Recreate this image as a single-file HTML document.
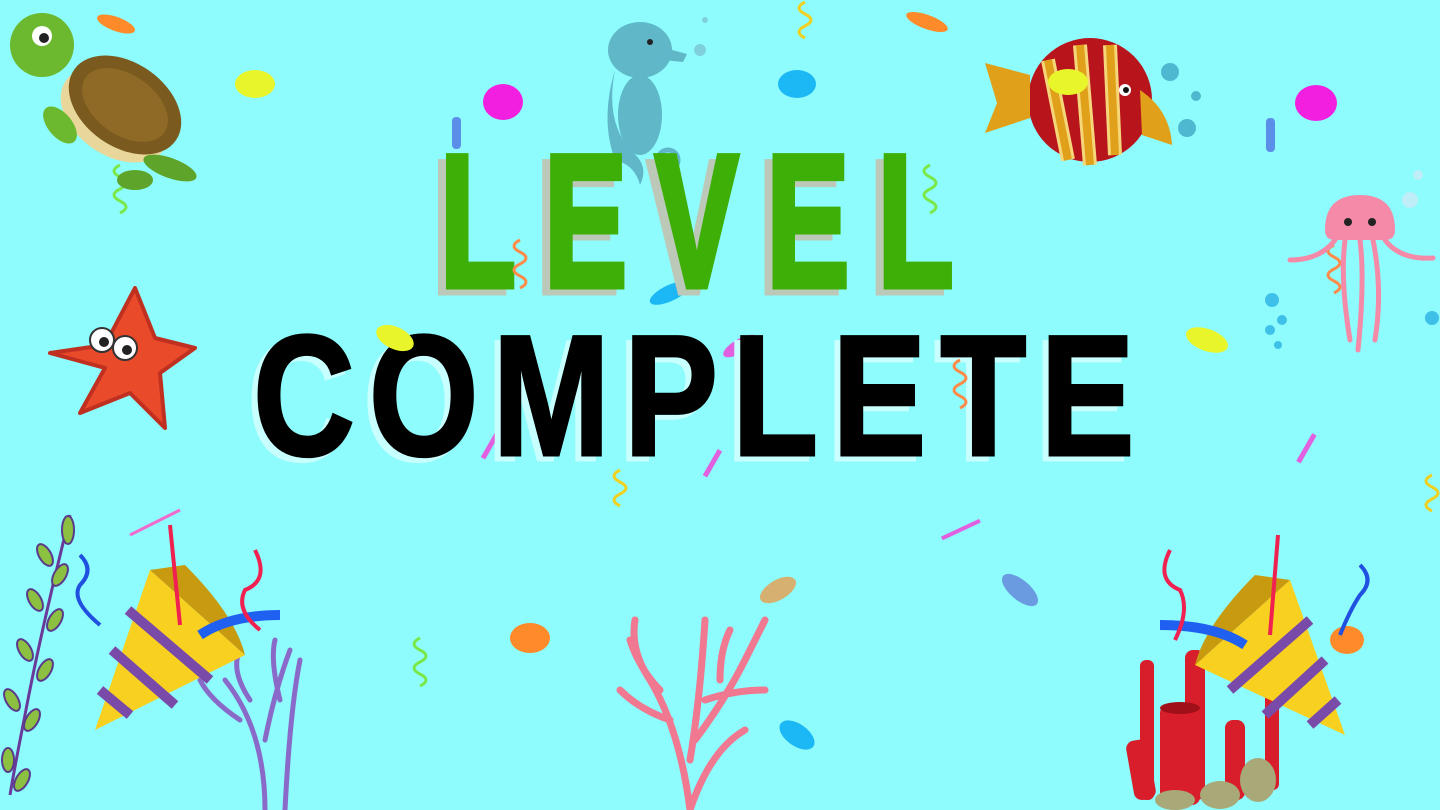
<!DOCTYPE html>
<html><head><meta charset="utf-8"><style>
html,body{margin:0;padding:0;width:1440px;height:810px;overflow:hidden;background:#8efcfc}
svg{display:block}
</style></head><body>
<svg width="1440" height="810" viewBox="0 0 1440 810" xmlns="http://www.w3.org/2000/svg">
<rect width="1440" height="810" fill="#8efcfc"/>
<g>
<ellipse cx="116" cy="24" rx="20" ry="7" fill="#ff8a2a" transform="rotate(20 116 24)"/>
<ellipse cx="255" cy="84" rx="20" ry="14" fill="#e8f52a"/>
<ellipse cx="503" cy="102" rx="20" ry="18" fill="#f21fe0"/>
<ellipse cx="797" cy="84" rx="19" ry="14" fill="#1cb8f5"/>
<ellipse cx="927" cy="22" rx="22" ry="7" fill="#ff8a2a" transform="rotate(20 927 22)"/>
<ellipse cx="1316" cy="103" rx="21" ry="18" fill="#f21fe0"/>
<rect x="452" y="117" width="9" height="32" rx="4" fill="#5b8ee8"/>
<rect x="1266" y="118" width="9" height="34" rx="4" fill="#5b8ee8"/>
<ellipse cx="670" cy="293" rx="22" ry="8" fill="#1cb8f5" transform="rotate(-25 670 293)"/>
<ellipse cx="740" cy="346" rx="19" ry="7" fill="#e060e0" transform="rotate(-30 740 346)"/>
<ellipse cx="1207" cy="340" rx="22" ry="11" fill="#e8f52a" transform="rotate(20 1207 340)"/>
<rect x="488" y="430" width="5" height="30" fill="#e060e0" transform="rotate(30 490 445)"/>
<rect x="710" y="448" width="5" height="30" fill="#e060e0" transform="rotate(30 712 463)"/>
<rect x="1304" y="432" width="5" height="32" fill="#e060e0" transform="rotate(30 1306 448)"/>
<rect x="940" y="528" width="42" height="4" fill="#e060e0" transform="rotate(-25 960 530)"/>
<ellipse cx="778" cy="590" rx="20" ry="10" fill="#d6b070" transform="rotate(-30 778 590)"/>
<ellipse cx="1020" cy="590" rx="22" ry="10" fill="#6a9ae0" transform="rotate(40 1020 590)"/>
<ellipse cx="530" cy="638" rx="20" ry="15" fill="#ff8a2a"/>
<ellipse cx="797" cy="735" rx="20" ry="11" fill="#1cb8f5" transform="rotate(35 797 735)"/>
<ellipse cx="1347" cy="640" rx="17" ry="14" fill="#ff8a2a"/>
</g>
<g fill="none" stroke-width="3">
<path d="M120 165 q-12 6 0 12 q12 6 0 12 q-12 6 0 12 q12 6 0 12" stroke="#7be84a"/>
<path d="M930 165 q-12 6 0 12 q12 6 0 12 q-12 6 0 12 q12 6 0 12" stroke="#7be84a"/>
<path d="M148 365 q-12 6 0 12 q12 6 0 12 q-12 6 0 12 q12 6 0 12" stroke="#ff8a4a"/>
<path d="M620 470 q-12 6 0 12 q12 6 0 12 q-12 6 0 12" stroke="#f0d020"/>
<path d="M805 2 q-12 6 0 12 q12 6 0 12 q-12 6 0 12" stroke="#f0d020"/>
<path d="M420 638 q-12 6 0 12 q12 6 0 12 q-12 6 0 12 q12 6 0 12" stroke="#7be84a"/>
<path d="M1334 245 q-12 6 0 12 q12 6 0 12 q-12 6 0 12 q12 6 0 12" stroke="#ff8a4a"/>
<path d="M1432 475 q-12 6 0 12 q12 6 0 12 q-12 6 0 12" stroke="#f0d020"/>
</g>
<g>
<ellipse cx="115" cy="115" rx="60" ry="40" fill="#e8d69a" transform="rotate(35 115 115)"/>
<ellipse cx="125" cy="105" rx="62" ry="42" fill="#7a5a1e" transform="rotate(35 125 105)"/>
<ellipse cx="125" cy="105" rx="48" ry="30" fill="#8e6a26" transform="rotate(35 125 105)"/>
<circle cx="42" cy="45" r="32" fill="#6cb82e"/>
<circle cx="42" cy="36" r="10" fill="#fff"/><circle cx="44" cy="38" r="5" fill="#222"/>
<ellipse cx="60" cy="125" rx="22" ry="12" fill="#6cb82e" transform="rotate(50 60 125)"/>
<ellipse cx="170" cy="168" rx="28" ry="10" fill="#5fa42a" transform="rotate(20 170 168)"/>
<ellipse cx="135" cy="180" rx="18" ry="10" fill="#5fa42a"/>
</g>
<g fill="#5fb7c8">
<ellipse cx="640" cy="50" rx="32" ry="28"/>
<path d="M665 48 l22 6 -4 8 -20 -2z"/>
<path d="M615 70 q-10 50 15 80 q20 15 10 35 q-5 -20 -25 -25 q-15 -40 0 -90z"/>
<ellipse cx="640" cy="115" rx="22" ry="40"/>
<circle cx="668" cy="160" r="10" fill="none" stroke="#5fb7c8" stroke-width="5"/>
<circle cx="650" cy="42" r="3" fill="#222"/>
<circle cx="700" cy="50" r="6" fill="#7fd0dc"/><circle cx="705" cy="20" r="3" fill="#7fd0dc"/>
</g>
<g>
<ellipse cx="1090" cy="100" rx="62" ry="62" fill="#b8141c"/>
<path d="M1048 60 l20 100 M1080 45 l10 120 M1110 45 l5 110" stroke="#f5d77a" stroke-width="14"/>
<path d="M1048 60 l20 100 M1080 45 l10 120 M1110 45 l5 110" stroke="#e0a01a" stroke-width="8"/>
<path d="M1030 75 l-45 -12 l12 40 l-12 30 l45 -15z" fill="#e0a01a"/>
<path d="M1140 90 q30 20 32 55 l-30 -10z" fill="#e0a01a"/>
<circle cx="1125" cy="90" r="6" fill="#fff"/><circle cx="1126" cy="90" r="3" fill="#111"/>
<ellipse cx="1068" cy="82" rx="20" ry="13" fill="#e8f52a"/>
<circle cx="1170" cy="72" r="9" fill="#4db8d0"/><circle cx="1187" cy="128" r="9" fill="#4db8d0"/><circle cx="1196" cy="96" r="5" fill="#4db8d0"/>
</g>
<g>
<path d="M1325 230 q0 -35 35 -35 q35 0 35 35 q0 10 -10 10 h-50 q-10 0 -10 -10z" fill="#f48aa8"/>
<circle cx="1348" cy="222" r="4" fill="#222"/><circle cx="1372" cy="222" r="4" fill="#222"/>
<g fill="none" stroke="#f48aa8" stroke-width="5" stroke-linecap="round">
<path d="M1335 240 q-15 20 -45 20"/><path d="M1385 240 q15 20 48 18"/>
<path d="M1345 240 q-5 40 5 100"/><path d="M1360 240 q5 40 -2 110"/><path d="M1373 240 q10 50 2 100"/>
</g>
<g fill="#3ec0e8"><circle cx="1272" cy="300" r="7"/><circle cx="1282" cy="320" r="5"/><circle cx="1270" cy="330" r="5"/><circle cx="1278" cy="345" r="4"/><circle cx="1432" cy="318" r="7"/><circle cx="1410" cy="200" r="8" fill="#bfeef8"/><circle cx="1418" cy="175" r="5" fill="#bfeef8"/></g>
</g>
<g>
<path d="M135 288 l20 50 l40 10 l-35 25 l5 55 l-35 -35 l-50 20 l25 -45 l-55 -15 l55 -8z" fill="#e84a2a" stroke="#c03020" stroke-width="4" stroke-linejoin="round"/>
<circle cx="102" cy="340" r="12" fill="#fff" stroke="#333" stroke-width="2"/><circle cx="125" cy="348" r="12" fill="#fff" stroke="#333" stroke-width="2"/>
<circle cx="104" cy="342" r="5" fill="#222"/><circle cx="127" cy="350" r="5" fill="#222"/>
</g>
<g font-family="'Liberation Sans',sans-serif" font-weight="bold">
<g transform="translate(432,292) scale(0.66,1)"><text x="0" y="0" font-size="188" textLength="778" lengthAdjust="spacing" fill="#bcc8b8" stroke="#bcc8b8" stroke-width="7">LEVEL</text></g>
<g transform="translate(440,286) scale(0.66,1)"><text x="0" y="0" font-size="188" textLength="778" lengthAdjust="spacing" fill="#3daf06" stroke="#3daf06" stroke-width="7">LEVEL</text></g>
<g transform="translate(247,460) scale(0.82,1)"><text x="0" y="0" font-size="172" textLength="1075" lengthAdjust="spacing" fill="#c8ffff" stroke="#c8ffff" stroke-width="3">COMPLETE</text></g>
<g transform="translate(253,455) scale(0.82,1)"><text x="0" y="0" font-size="172" textLength="1075" lengthAdjust="spacing" fill="#000" stroke="#000" stroke-width="3">COMPLETE</text></g>
</g>
<ellipse cx="395" cy="338" rx="20" ry="11" fill="#e8f52a" transform="rotate(25 395 338)"/>
<path d="M520 240 q-12 6 0 12 q12 6 0 12 q-12 6 0 12 q12 6 0 12" stroke="#ff8a4a" stroke-width="3" fill="none"/>
<path d="M960 360 q-12 6 0 12 q12 6 0 12 q-12 6 0 12 q12 6 0 12" stroke="#ff8a4a" stroke-width="3" fill="none"/>
<g>
<path d="M70 515 q-30 120 -45 200 q-10 50 -15 80" stroke="#6a3a9a" stroke-width="3" fill="none"/>
<g fill="#8cc040" stroke="#5a3a8a" stroke-width="2">
<ellipse cx="68" cy="530" rx="6" ry="14"/><ellipse cx="45" cy="555" rx="6" ry="12" transform="rotate(-30 45 555)"/><ellipse cx="60" cy="575" rx="6" ry="12" transform="rotate(30 60 575)"/>
<ellipse cx="35" cy="600" rx="6" ry="12" transform="rotate(-30 35 600)"/><ellipse cx="55" cy="620" rx="6" ry="12" transform="rotate(30 55 620)"/>
<ellipse cx="25" cy="650" rx="6" ry="12" transform="rotate(-30 25 650)"/><ellipse cx="45" cy="670" rx="6" ry="12" transform="rotate(30 45 670)"/>
<ellipse cx="12" cy="700" rx="6" ry="12" transform="rotate(-30 12 700)"/><ellipse cx="32" cy="720" rx="6" ry="12" transform="rotate(30 32 720)"/>
<ellipse cx="8" cy="760" rx="6" ry="12"/><ellipse cx="22" cy="780" rx="6" ry="12" transform="rotate(30 22 780)"/>
</g>
</g>
<g fill="none" stroke="#8a6ac8" stroke-width="5" stroke-linecap="round">
<path d="M265 810 q0 -80 -40 -130 M265 740 q10 -50 25 -90 M280 700 q-10 -40 -5 -60 M285 810 q5 -100 15 -150 M240 720 q-30 -20 -40 -40 M250 700 q-20 -30 -10 -50"/>
</g>
<g fill="none" stroke="#f07890" stroke-width="7" stroke-linecap="round">
<path d="M690 810 q-10 -80 -40 -130 q-20 -30 -15 -60 M690 760 q10 -60 15 -140 M695 740 q30 -40 50 -80 q10 -20 20 -40 M670 720 q-30 -10 -50 -30 M705 700 q30 -10 60 -10 M660 690 q-20 -20 -30 -50 M720 680 q0 -30 10 -50 M690 810 q20 -60 55 -80"/>
</g>
<g fill="#d81e2a">
<rect x="1140" y="660" width="14" height="140" rx="6"/><rect x="1160" y="705" width="40" height="100" rx="8"/>
<rect x="1185" y="650" width="20" height="150" rx="8"/><rect x="1225" y="720" width="20" height="80" rx="8"/>
<rect x="1130" y="740" width="22" height="60" rx="8" transform="rotate(-10 1140 770)"/>
<rect x="1265" y="680" width="14" height="110" rx="6"/>
<ellipse cx="1180" cy="708" rx="20" ry="6" fill="#a01018"/>
</g>
<g fill="#a8a878"><ellipse cx="1258" cy="780" rx="18" ry="22"/><ellipse cx="1220" cy="795" rx="20" ry="14"/><ellipse cx="1175" cy="800" rx="20" ry="10"/></g>
<g>
<path d="M150 570 l95 85 l-150 75z" fill="#f8d020"/>
<path d="M150 570 l95 85 q-10 -40 -60 -90z" fill="#c89a10"/>
<g stroke="#7a4aa8" stroke-width="10"><line x1="128" y1="610" x2="210" y2="680"/><line x1="112" y1="650" x2="175" y2="705"/><line x1="100" y1="690" x2="130" y2="715"/></g>
<path d="M200 635 q30 -20 80 -20" stroke="#2060f0" stroke-width="10" fill="none"/>
<path d="M170 525 l10 100" stroke="#f02050" stroke-width="4"/>
<path d="M255 550 q15 30 -10 40 q-10 20 15 40" stroke="#f02050" stroke-width="4" fill="none"/>
<path d="M80 555 q15 15 0 30 q-10 15 20 40" stroke="#2050e0" stroke-width="4" fill="none"/>
<path d="M130 535 l50 -25" stroke="#f06ad0" stroke-width="3"/>
</g>
<g>
<path d="M1290 580 l-95 85 l150 70z" fill="#f8d020"/>
<path d="M1290 580 l-95 85 q10 -40 60 -90z" fill="#c89a10"/>
<g stroke="#7a4aa8" stroke-width="10"><line x1="1310" y1="620" x2="1230" y2="690"/><line x1="1325" y1="660" x2="1265" y2="715"/><line x1="1338" y1="700" x2="1310" y2="725"/></g>
<path d="M1245 645 q-30 -20 -85 -20" stroke="#2060f0" stroke-width="10" fill="none"/>
<path d="M1278 535 l-8 100" stroke="#f02050" stroke-width="4"/>
<path d="M1170 550 q-15 30 10 40 q10 20 -5 50" stroke="#f02050" stroke-width="4" fill="none"/>
<path d="M1360 565 q15 15 0 30 q-10 15 -20 40" stroke="#2050e0" stroke-width="4" fill="none"/>
</g>
</svg>
</body></html>
